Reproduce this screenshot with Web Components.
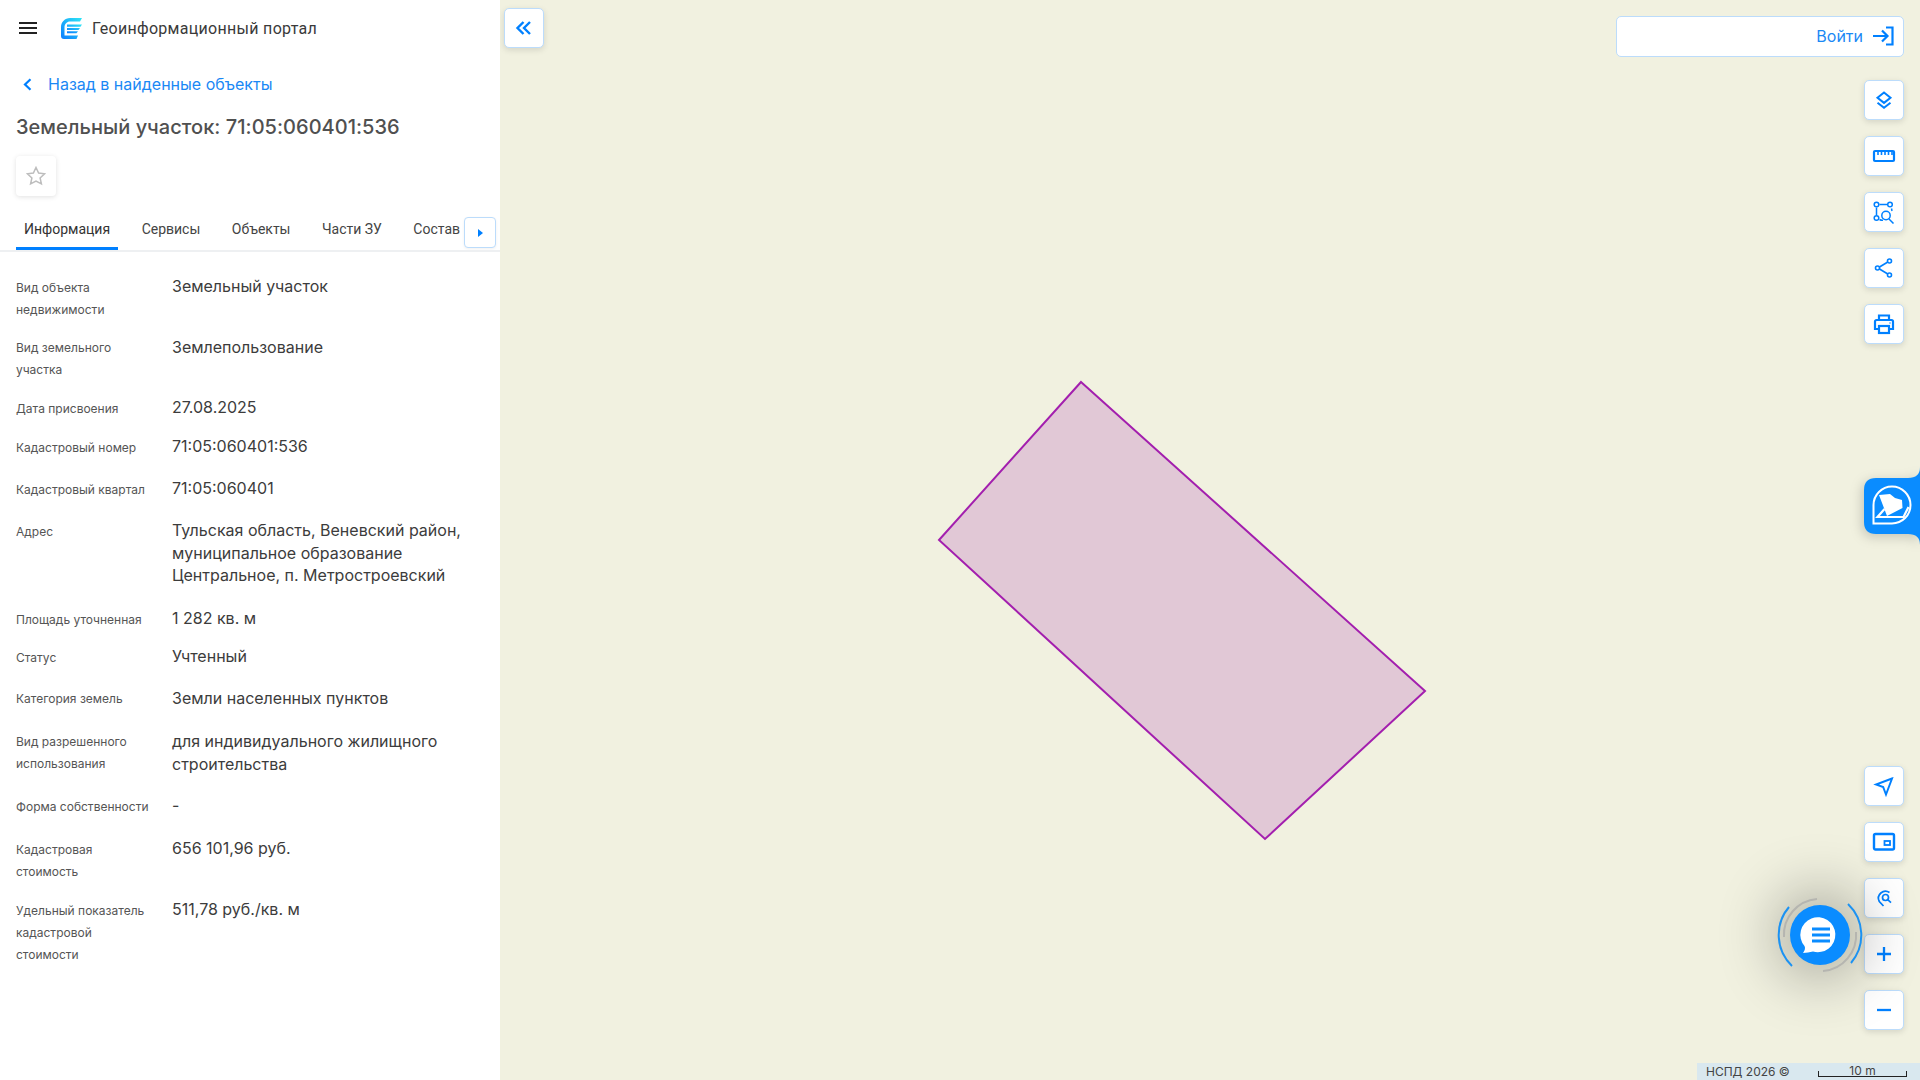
<!DOCTYPE html>
<html lang="ru">
<head>
<meta charset="utf-8">
<title>Геоинформационный портал</title>
<style>
    html, body { margin: 0; height: 100%; overflow: hidden; }
    body { font-family: Inter, "Noto Sans", sans-serif; color: #333; background: #f1f1e0; }
</style>
</head>
<body>
<geo-app>
    <geo-panel slot="panel">
        <info-row label="Вид объекта недвижимости" top="22.5" lift="2.5">Земельный участок</info-row>
        <info-row label="Вид земельного участка" top="14.5" lift="1">Землепользование</info-row>
        <info-row label="Дата присвоения" top="15.75" lift="2">27.08.2025</info-row>
        <info-row label="Кадастровый номер" top="15" lift="2">71:05:060401:536</info-row>
        <info-row label="Кадастровый квартал" top="17.8" lift="1.5">71:05:060401</info-row>
        <info-row label="Адрес" top="18.75" lift="2">Тульская область, Веневский район, муниципальное образование Центральное, п. Метростроевский</info-row>
        <info-row label="Площадь уточненная" top="20.3" lift="1.5">1 282 кв. м</info-row>
        <info-row label="Статус" top="14.75" lift="2">Учтенный</info-row>
        <info-row label="Категория земель" top="17.3" lift="1.5">Земли населенных пунктов</info-row>
        <info-row label="Вид разрешенного использования" top="20" lift="1">для индивидуального жилищного строительства</info-row>
        <info-row label="Форма собственности" top="19.3" lift="2">-</info-row>
        <info-row label="Кадастровая стоимость" top="19" lift="2">656 101,96 руб.</info-row>
        <info-row label="Удельный показатель кадастровой стоимости" top="15" lift="2">511,78 руб./кв. м</info-row>
    </geo-panel>
    <geo-map slot="map"></geo-map>
</geo-app>

<script>
'use strict';

const BLUE = '#0080ff';

const icons = {
    layers: '<path d="M12 4.500l6.500 5.200-6.500 5.200-6.500-5.200z"/><path d="M5.500 14.800l6.500 5 6.500-5"/>',
    ruler: '<rect x="2" y="7" width="20" height="10" rx="1" stroke-width="2.200"/><path d="M6 7v4M9.500 7v4M13 7v4M16.500 7v4M20 7v4" stroke-width="1.600"/>',
    area: '<g stroke-width="1.500" transform="translate(0 1)"><circle cx="4.500" cy="3.500" r="2.300"/><circle cx="18" cy="3.500" r="2.300"/><circle cx="4.500" cy="17" r="2.300"/><circle cx="14" cy="14.500" r="4.200"/><path d="M7.500 3.500h7.500M4.500 6.500v7.500M7.500 18.500q2 1 3.500 .7M17 18l4.500 4.500M19.500 7.500l.5 2.500"/></g>',
    share: '<g stroke-width="1.600"><circle cx="5.500" cy="12" r="2"/><circle cx="17.500" cy="5" r="2"/><circle cx="17.500" cy="19" r="2"/><path d="M7.500 11l8.300-5M7.500 13l8.300 5"/></g>',
    print: '<path d="M7 8V3.500h10V8M7 17H3V9.500a1.500 1.500 0 0 1 1.500-1.500h15A1.500 1.500 0 0 1 21 9.500V17h-4" stroke-width="2.200"/><rect x="7" y="14" width="10" height="7" stroke-width="2.200"/><path d="M17.500 11h1" stroke-width="1.500"/>',
    nav: '<path d="M20 4.500L4 10.500l7.200 2.600 2.800 7.400z" stroke-width="1.900"/>',
    minimap: '<rect x="2" y="4" width="20" height="15.500" rx="1.500" stroke-width="2.400"/><rect x="12.500" y="11" width="5.500" height="4" stroke-width="1.800"/>',
    pin: '<g stroke-width="1.700"><path d="M11.500 20L7.300 15.500A7 7 0 0 1 17.500 6.500"/><circle cx="13.500" cy="11.500" r="3"/><path d="M15.700 13.700l3.300 3"/></g>',
    plus: '<path d="M12 5v14M5 12h14" stroke-width="2.300"/>',
    minus: '<path d="M5 12h14" stroke-width="2.300"/>'
};

class GeoApp extends HTMLElement {
    connectedCallback() {
        this.root = this.attachShadow({ mode: 'open' });
        this.root.innerHTML =
            `<style>
    :host { display: flex; width: 1920px; height: 1080px; }
    .panel { width: 500px; flex: none; background: #fff; }
    .map { flex: 1; min-width: 0; }
    </style>
    <div class="panel"><slot name="panel"></slot></div>
    <div class="map"><slot name="map"></slot></div>`;
    }
}

class GeoPanel extends HTMLElement {
    connectedCallback() {
        this.root = this.attachShadow({ mode: 'open' });
        this.root.innerHTML =
            `<style>
    :host { display: block; height: 1080px; overflow: hidden; }
    .top { display: flex; align-items: center; height: 56px; padding-left: 19px; }
    .burger { width: 18px; height: 12px; border-top: 2px solid #222; border-bottom: 2px solid #222; position: relative; box-sizing: border-box; }
    .burger::after { content: ''; position: absolute; left: 0; right: 0; top: 3px; height: 2px; background: #222; }
    .logo { margin-left: 24px; display: block; }
    .title { margin-left: 10px; padding-top: 1px; font: 400 16px/22px Roboto, sans-serif; letter-spacing: .3px; color: #3a3a3a; }
    .back { display: flex; align-items: center; margin-top: 16px; height: 24px; padding-left: 23px; color: #1a88f5; font-size: 16px; }
    .back svg { margin-right: 16px; }
    h1 { margin: 17px 0 0 16px; font: 500 20px/28px Inter, sans-serif; letter-spacing: .03px; color: #505050; }
    .star { margin: 15px 0 0 16px; width: 40px; height: 40px; border-radius: 4px; background: #fff; box-shadow: 0 1px 5px rgba(0,0,0,.12); display: flex; align-items: center; justify-content: center; }
    .tabs { display: flex; margin-top: 16px; height: 38px; border-bottom: 2px solid #eef0f2; position: relative; padding-left: 16px; overflow: hidden; }
    .tab { font: 400 14px/34px Roboto, sans-serif; color: #444; padding: 0 8px; margin-right: 15.500px; height: 36px; white-space: nowrap; flex: none; box-sizing: border-box; }
    .tab.on { border-bottom: 3px solid ${BLUE}; height: 38px; color: #333; }
    .more { position: absolute; right: 4px; top: 5px; width: 32px; height: 31px; box-sizing: border-box; background: #fff; border: 1px solid #bcdcfb; border-radius: 4px; display: flex; align-items: center; justify-content: center; box-shadow: 0 1px 3px rgba(0,0,0,.06); }
    .more i { width: 0; height: 0; border-left: 5px solid ${BLUE}; border-top: 4.500px solid transparent; border-bottom: 4.500px solid transparent; }
    .rows { padding-left: 16px; }
    </style>
    <div class="top">
        <div class="burger"></div>
        <svg class="logo" width="21" height="21" viewBox="0 0 21 21">
            <defs><linearGradient id="lg" x1="0" y1="1" x2="1" y2="0"><stop offset="0" stop-color="#0a7cff"/><stop offset="1" stop-color="#2fe6f5"/></linearGradient></defs>
            <path d="M9 0H21L19 3.500H9C6 3.500 3.500 6 3.500 9V17.500H17L15.500 21H3Q0 21 0 18V9C0 4 4 0 9 0Z" fill="url(#lg)"/>
            <path d="M6 6.500h15l-1.500 2.200H6zM6 10h13l-1.500 2H6zM6 13.200h11l-1.500 2H6z" fill="url(#lg)"/>
        </svg>
        <span class="title">Геоинформационный портал</span>
    </div>
    <div class="back">
        <svg width="9" height="13" viewBox="0 0 9 13" fill="none" stroke="${BLUE}" stroke-width="2.200"><path d="M7.500 1.200L2 6.500l5.500 5.300"/></svg>
        <span>Назад в найденные объекты</span>
    </div>
    <h1>Земельный участок: 71:05:060401:536</h1>
    <div class="star">
        <svg width="20" height="20" viewBox="0 0 20 20" fill="none" stroke="#bdbdbd" stroke-width="1.500"><path d="M10 1.500l2.600 5.600 6 .7-4.500 4.100 1.300 6L10 15l-5.400 2.900 1.300-6L1.400 7.800l6-.7z"/></svg>
    </div>
    <div class="tabs">
        <span class="tab on">Информация</span>
        <span class="tab">Сервисы</span>
        <span class="tab">Объекты</span>
        <span class="tab">Части ЗУ</span>
        <span class="tab">Состав</span>
        <div class="more"><i></i></div>
    </div>
    <div class="rows"><slot></slot></div>`;
    }
}

class InfoRow extends HTMLElement {
    connectedCallback() {
        this.root = this.attachShadow({ mode: 'open' });
        const top = this.getAttribute('top') || '16';
        const lift = this.getAttribute('lift') || '0';
        this.root.innerHTML =
            `<style>
    :host { display: grid; grid-template-columns: 156px 312px; padding-top: ${top}px; }
    .label { font-size: 12px; line-height: 22px; color: #555; padding: ${lift}px 20px 0 0; }
    .value { font-size: 16px; line-height: 22.500px; color: #3c3c3c; }
    </style>
    <div class="label">${this.getAttribute('label')}</div>
    <div class="value"><slot></slot></div>`;
    }
}

class MapButton extends HTMLElement {
    connectedCallback() {
        this.root = this.attachShadow({ mode: 'open' });
        const name = this.getAttribute('icon');
        this.root.innerHTML =
            `<style>
    :host { display: flex; width: 40px; height: 40px; box-sizing: border-box; align-items: center; justify-content: center; background: #fff; border: 1px solid #bcdcfb; border-radius: 5px; box-shadow: 0 2px 6px rgba(0,0,0,.12); }
    svg { display: block; }
    </style>
    <svg width="24" height="24" viewBox="0 0 24 24" fill="none" stroke="${BLUE}" stroke-width="2">${icons[name] || ''}</svg>`;
    }
}

class ChatFab extends HTMLElement {
    connectedCallback() {
        this.root = this.attachShadow({ mode: 'open' });
        this.root.innerHTML =
            `<style>
    :host { display: block; width: 100px; height: 100px; position: relative; }
    .disc { position: absolute; left: 20px; top: 20px; width: 60px; height: 60px; border-radius: 50%; background: #0a8cff; box-shadow: 0 0 60px 14px rgba(0,0,0,.3); }
    svg { position: absolute; left: 0; top: 0; }
    </style>
    <div class="disc"></div>
    <svg width="100" height="100" viewBox="0 0 100 100" fill="none">
        <path d="M19 22A43 43 0 0 0 22 81M78 19A43 43 0 0 1 81 78" stroke="#1c92f2" stroke-width="2"/>
        <path d="M47 14A36 36 0 0 0 14 52M86 47A36 36 0 0 1 53 86" stroke="#b5b5b0" stroke-width="2"/>
        <path d="M33 68q3 -4 1.500 -7A17.500 17.500 0 1 1 43 66.500q-5 1 -10 1.500z" fill="#fff"/>
        <path d="M42 44h18M42 50h18M42 56h18" stroke="#0a8cff" stroke-width="2.800"/>
    </svg>`;
    }
}

class SideTab extends HTMLElement {
    connectedCallback() {
        this.root = this.attachShadow({ mode: 'open' });
        this.root.innerHTML =
            `<style>
    :host { display: block; width: 56px; height: 78px; }
    svg { display: block; filter: drop-shadow(-2px 3px 6px rgba(0,0,0,.18)); }
    </style>
    <svg width="56" height="78" viewBox="0 0 56 78">
        <path d="M56 0Q56 11 44 11H12Q0 11 0 23V55Q0 67 12 67H44Q56 67 56 78Z" fill="#0a8cff"/>
        <path d="M9.500 56.500V38A18.500 18.500 0 1 1 28 56.500Z" fill="none" stroke="#fff" stroke-width="2"/>
        <path d="M15 28L26 27l5 4 7 2 .5 8L23 49z" fill="#fff"/>
        <path d="M20.500 42L13.500 50H39.500L44.500 40" fill="none" stroke="#fff" stroke-width="2.200"/>
    </svg>`;
    }
}

class GeoMap extends HTMLElement {
    connectedCallback() {
        this.root = this.attachShadow({ mode: 'open' });
        const top = ['layers', 'ruler', 'area', 'share', 'print'];
        const bottom = ['nav', 'minimap', 'pin', 'plus', 'minus'];
        const buttons = (list) => list.map((n) => `<map-button icon="${n}"></map-button>`).join('');
        this.root.innerHTML =
            `<style>
    :host { display: block; position: relative; width: 1420px; height: 1080px; background: #f1f1e0; overflow: hidden; }
    .shape { position: absolute; left: 0; top: 0; }
    .collapse { position: absolute; left: 4px; top: 8px; }
    .login { position: absolute; right: 16px; top: 16px; width: 288px; height: 41px; box-sizing: border-box; display: flex; align-items: center; justify-content: flex-end; gap: 9px; padding: 0 9px 1px 0; background: #fff; border: 1px solid #bcdcfb; border-radius: 5px; color: #1a88f5; font-size: 16px; }
    .col { position: absolute; right: 16px; display: flex; flex-direction: column; gap: 16px; }
    .tools { top: 80px; }
    .nav { bottom: 50px; }
    side-tab { position: absolute; right: 0; top: 467px; }
    chat-fab { position: absolute; left: 1270px; top: 885px; }
    .foot { position: absolute; right: 0; bottom: 0; width: 223px; height: 17px; background: #d9e8ef; font-size: 12px; line-height: 17px; color: #444; }
    .foot .copy { margin-left: 9px; }
    .scale { position: absolute; left: 121px; top: 8px; width: 89px; height: 6px; box-sizing: border-box; border: 1px solid #222; border-top: 0; }
    .scale span { position: absolute; left: 0; right: 0; top: -9px; text-align: center; }
    </style>
    <svg class="shape" width="1420" height="1080">
        <polygon points="581,382 925,691 765,839 439,540" fill="#e1c8d6" stroke="#a31fae" stroke-width="2"/>
    </svg>
    <map-button class="collapse" id="collapse"></map-button>
    <div class="login">
        <span>Войти</span>
        <svg width="22" height="20" viewBox="0 0 22 20" fill="none" stroke="${BLUE}" stroke-width="2.200"><path d="M1 10h14M10 4.500L15.500 10 10 15.500M14 1.500h6.500v17H14"/></svg>
    </div>
    <div class="col tools">${buttons(top)}</div>
    <side-tab></side-tab>
    <div class="col nav">${buttons(bottom)}</div>
    <chat-fab></chat-fab>
    <div class="foot">
        <span class="copy">НСПД 2026 ©</span>
        <div class="scale"><span>10 m</span></div>
    </div>`;
        this.root.getElementById('collapse').shadowRoot.querySelector('svg').innerHTML =
            '<path d="M11.500 6l-6 6 6 6M18 6l-6 6 6 6" stroke-width="2.400"/>';
    }
}

window.customElements.define('geo-app', GeoApp);
window.customElements.define('geo-panel', GeoPanel);
window.customElements.define('info-row', InfoRow);
window.customElements.define('map-button', MapButton);
window.customElements.define('chat-fab', ChatFab);
window.customElements.define('side-tab', SideTab);
window.customElements.define('geo-map', GeoMap);
</script>
</body>
</html>
